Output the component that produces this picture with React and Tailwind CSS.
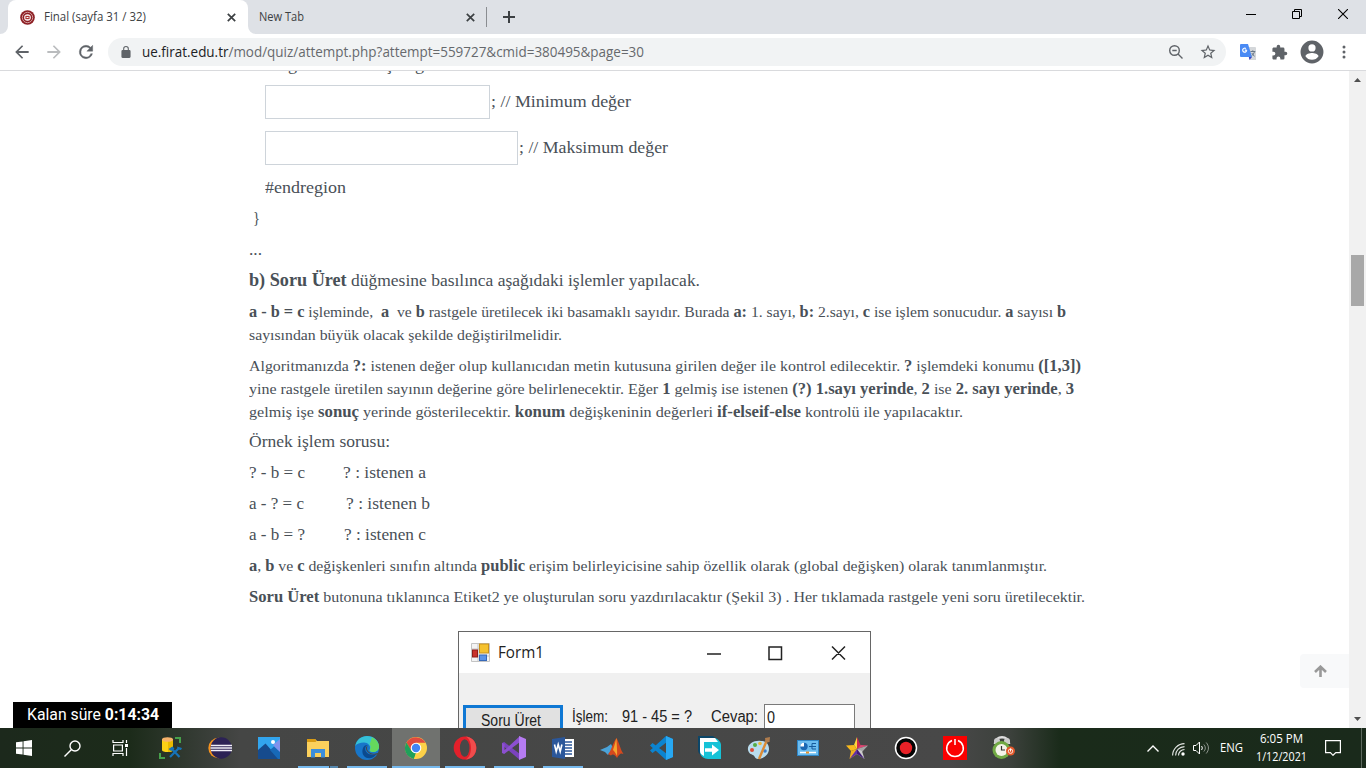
import { useLayoutEffect, useRef } from "react";

// Inline text that is stretched (or letter-spaced) so that it takes exactly w pixels.
function Fit({ w, spaced = false, className = "", children }) {
  const ref = useRef(null);
  useLayoutEffect(() => {
    const el = ref.current;
    el.style.letterSpacing = "0px";
    el.style.transform = "none";
    const width = el.getBoundingClientRect().width;
    if (spaced) el.style.letterSpacing = `${(w - width) / el.textContent.length}px`;
    else el.style.transform = `scaleX(${w / width})`;
  }, [w, spaced]);
  return (
    <span className="block whitespace-pre" style={{ width: w }}>
      <span ref={ref} className={`inline-block origin-left whitespace-pre ${className}`}>{children}</span>
    </span>
  );
}

const B = ({ children }) => <b className="text-[1.04em] leading-[0] font-bold">{children}</b>;

function Line({ w, small, children }) {
  return (
    <div className={small ? "text-[15.6px]" : "text-[17.3px]"}>
      <Fit w={w}>{children}</Fit>
    </div>
  );
}

const CloseX = () => (
  <svg className="h-[9px] w-[9px]" viewBox="0 0 9 9" stroke="#3c4043" strokeWidth="1.7"><path d="M.8.8l7.4 7.4M8.2.8L.8 8.2" /></svg>
);

function TabStrip() {
  return (
    <div className="flex h-[34px] shrink-0 bg-[#dee1e6] font-['Open_Sans',sans-serif] text-[12px] text-[#3c4043]">
      <svg className="mt-[26px] h-2 w-2" viewBox="0 0 8 8"><path d="M8 0v8H0A8 8 0 0 0 8 0z" fill="#fff" /></svg>
      <div className="flex w-[240px] items-center rounded-t-lg bg-white pl-3 pr-[12px]">
        <svg className="mr-[9px] h-[15px] w-[15px]" viewBox="0 0 15 15">
          <circle cx="7.5" cy="7.5" r="7.3" fill="#8d1f24" />
          <circle cx="7.5" cy="7.5" r="5.2" fill="none" stroke="#d9a9aa" strokeWidth=".9" />
          <circle cx="7.5" cy="7.5" r="3.3" fill="#fff" />
          <path d="M5.4 5.8h4.2v3.4H5.4z" fill="#a33" />
          <path d="M6.5 7.5h2" stroke="#fff" />
        </svg>
        <Fit w={102}>Final (sayfa 31 / 32)</Fit>
        <div className="ml-auto"><CloseX /></div>
      </div>
      <svg className="mt-[26px] h-2 w-2" viewBox="0 0 8 8"><path d="M0 0v8h8A8 8 0 0 1 0 0z" fill="#fff" /></svg>
      <div className="flex w-[230px] items-center pl-[3px] pr-[11px]">
        <Fit w={45}>New Tab</Fit>
        <div className="ml-auto"><CloseX /></div>
      </div>
      <div className="mt-[7px] h-[20px] w-px bg-[#8a8d91]" />
      <svg className="ml-[16px] mt-[11px] h-[12px] w-[12px]" viewBox="0 0 12 12" stroke="#3c4043" strokeWidth="2"><path d="M6 0v12M0 6h12" /></svg>
      <div className="ml-auto flex items-start pr-[18px] text-black">
        <svg className="mt-[9px] h-[11px] w-[10px]" viewBox="0 0 10 11"><path d="M0 5.5h10" stroke="#000" /></svg>
        <svg className="ml-[36px] mt-[9px] h-[10px] w-[10px]" viewBox="0 0 10 10" fill="none" stroke="#000"><path d="M.5 2.5h7v7h-7zM2.5 2.5v-2h7v7h-2" /></svg>
        <svg className="ml-[36px] mt-[9px] h-[10px] w-[10px]" viewBox="0 0 10 10" stroke="#000" strokeWidth="1.1"><path d="M0 0l10 10M10 0L0 10" /></svg>
      </div>
    </div>
  );
}

function Toolbar() {
  return (
    <div className="flex h-[37px] shrink-0 items-center border-b border-[#d9dadd] bg-white pl-[12px]">
      <svg className="h-5 w-5" viewBox="0 0 24 24" fill="#5f6368"><path d="M20 10.800H7.830l5.590-5.590L12 3.800l-8.200 8.200 8.200 8.200 1.410-1.410L7.830 13.200H20z" /></svg>
      <svg className="ml-[12px] h-5 w-5" viewBox="0 0 24 24" fill="#babcbe"><path d="M4 13.200h12.170l-5.590 5.590L12 20.200l8.200-8.200L12 3.800l-1.410 1.410 5.580 5.590H4z" /></svg>
      <svg className="ml-[12px] h-5 w-5" viewBox="0 0 24 24" fill="#5f6368" stroke="#5f6368" strokeWidth=".5"><path d="M17.65 6.35A7.96 7.96 0 0 0 12 4a8 8 0 1 0 7.73 10h-2.08A6 6 0 1 1 12 6c1.66 0 3.14.69 4.22 1.78L13 11h7V4l-2.35 2.35z" /></svg>
      <div className="ml-[12px] flex h-[28px] w-[1118px] items-center rounded-full bg-[#f1f3f4] pl-[13px] pr-[9px] font-['Open_Sans',sans-serif] text-[13.6px] text-[#66696d]">
        <svg className="mb-[1px] h-[12px] w-[10px]" viewBox="4 1 16 21" fill="#5f6368"><path d="M18 8h-1V6A5 5 0 0 0 7 6v2H6a2 2 0 0 0-2 2v10c0 1.100.9 2 2 2h12a2 2 0 0 0 2-2V10a2 2 0 0 0-2-2zM8.900 6a3.100 3.100 0 0 1 6.200 0v2H8.900z" /></svg>
        <div className="ml-[11px]">
          <Fit w={502}><span className="text-[#202124]">ue.firat.edu.tr</span>/mod/quiz/attempt.php?attempt=559727&amp;cmid=380495&amp;page=30</Fit>
        </div>
        <svg className="ml-auto h-4 w-4" viewBox="0 0 16 16" fill="none" stroke="#5f6368" strokeWidth="1.4"><circle cx="6.500" cy="6.500" r="4.800" /><path d="M10 10l4.500 4.500M4.300 6.500h4.400" /></svg>
        <svg className="ml-[15px] h-[18px] w-[18px]" viewBox="0 0 24 24" fill="#5f6368"><path d="M22 9.240l-7.190-.62L12 2 9.190 8.630 2 9.240l5.460 4.730L5.820 21 12 17.270 18.180 21l-1.630-7.030L22 9.240zM12 15.400l-3.760 2.270 1-4.280-3.320-2.880 4.380-.38L12 6.100l1.710 4.040 4.380.38-3.320 2.880 1 4.280L12 15.400z" /></svg>
      </div>
      <svg className="ml-[14px] h-4 w-4" viewBox="0 0 16 16">
        <path d="M6 3h9a1 1 0 0 1 1 1v12h-6z" fill="#d4d7da" />
        <path d="M0 1a1 1 0 0 1 1-1h7l4 13H1a1 1 0 0 1-1-1z" fill="#4a8af4" />
        <path d="M8.800 13H12l-2.500 3z" fill="#3b46c4" />
        <path d="M6.700 6.200H4.800M6.700 6.300A2 2 0 1 1 5.900 4.600" fill="none" stroke="#fff" strokeWidth="1.200" />
        <path d="M10.500 7.500h4.800M12.800 6.300v1.200M14.500 7.500c-.5 2-1.500 3.300-3 4.500M11.800 9c.7 1.400 1.600 2.400 2.800 3.200" fill="none" stroke="#687787" />
      </svg>
      <svg className="ml-[15px] h-[17px] w-[17px]" viewBox="0 0 24 24" fill="#5f6368"><path d="M20.500 11H19V7a2 2 0 0 0-2-2h-4V3.500a2.500 2.500 0 0 0-5 0V5H4c-1.100 0-1.990.9-1.990 2v3.800H3.500a2.700 2.700 0 0 1 0 5.400H2V20c0 1.100.9 2 2 2h3.800v-1.500a2.700 2.700 0 0 1 5.400 0V22H17a2 2 0 0 0 2-2v-4h1.500a2.500 2.500 0 0 0 0-5z" /></svg>
      <svg className="ml-[12px] h-[24px] w-[24px]" viewBox="1 1 22 22" fill="#5f6368"><path d="M12 1.500a10.500 10.500 0 1 0 0 21 10.500 10.500 0 0 0 0-21zM12 5a3.300 3.300 0 1 1 0 6.600A3.300 3.300 0 0 1 12 5zm0 14.200a7.200 7.200 0 0 1-6-3.220c.03-1.990 4-3.080 6-3.080s5.970 1.090 6 3.080a7.200 7.200 0 0 1-6 3.220z" /></svg>
      <svg className="ml-[18px] h-[16px] w-[4px]" viewBox="0 0 4 16" fill="#5f6368"><circle cx="2" cy="3" r="1.500" /><circle cx="2" cy="8" r="1.500" /><circle cx="2" cy="13" r="1.500" /></svg>
    </div>
  );
}

function FormShot() {
  return (
    <div className="ml-[209px] mt-[14px] h-[120px] w-[413px] shrink-0 border border-[#666] bg-[#f0f0f0] font-['Open_Sans',sans-serif] text-[#222]">
      <div className="flex h-[41px] items-center bg-white pl-[12px] text-[17px]">
        <svg className="h-[19px] w-[19px]" viewBox="0 0 19 19">
          <path d="M.5.500h18v18H.5zM.5 6h18M.5 13h18M7 .5v18" fill="#f4f4f4" stroke="#c4c4c4" />
          <rect x="8.500" y="1" width="9" height="9" fill="#f5c22f" stroke="#c9921c" />
          <rect x="1.500" y="7" width="5" height="7" fill="#c8322b" stroke="#8f1d19" />
          <rect x="8.500" y="12" width="7" height="5.500" fill="#5c94e8" stroke="#3769b8" />
        </svg>
        <div className="ml-[8px]"><Fit w={46}>Form1</Fit></div>
        <svg className="ml-auto mr-[24px] h-[16px] w-[140px]" viewBox="0 0 140 16" fill="none" stroke="#222" strokeWidth="1.500"><path d="M1 9h14M63 2h12.500v12.500H63zM126 1.500l13 13M139 1.500l-13 13" /></svg>
      </div>
      <div className="flex pt-[31px] font-['Liberation_Sans',sans-serif] text-[16px] leading-[28px]">
        <div className="ml-[4px] mt-[1px] flex h-[34px] w-[100px] border-[3px] border-[#0f78d4] bg-[#e1e1e1] pl-[15px] leading-[25px]"><Fit w={60}>Soru Üret</Fit></div>
        <div className="ml-[9px] leading-[26px]"><Fit w={36}>İşlem:</Fit></div>
        <div className="ml-[14px] leading-[26px]"><Fit w={70}>91 - 45 = ?</Fit></div>
        <div className="ml-[19px] leading-[26px]"><Fit w={47}>Cevap:</Fit></div>
        <div className="ml-[6px] h-[34px] w-[91px] border-[1.5px] border-[#7a7a7a] bg-white pl-[2px] leading-[25px]"><Fit w={8}>0</Fit></div>
      </div>
    </div>
  );
}

function Page() {
  return (
    <div className="relative flex min-h-0 flex-1 bg-white">
      <div className="flex min-w-0 flex-1 flex-col overflow-hidden pl-[249px] font-['Liberation_Serif',serif] leading-[22.93px] text-[#495057]">
        <div className="-mt-[17px] flex h-[23px] shrink-0 pl-[16px] text-[17.300px]">
          <Fit w={95}>#region Sınıf</Fit><div className="ml-[9px]"><Fit w={60}>başlangı</Fit></div>
        </div>
        <div className="mt-2 flex h-[34px] shrink-0 items-center pl-[16px]"><div className="mr-px h-full w-[225px] border border-[#ced4da]" /><Line w={140}>; // Minimum değer</Line></div>
        <div className="mt-3 flex h-[34px] shrink-0 items-center pl-[16px]"><div className="mr-px h-full w-[253px] border border-[#ced4da]" /><Line w={149}>; // Maksimum değer</Line></div>
        <div className="mt-[12px] flex flex-col gap-2">
          <div className="pl-[16px]"><Line w={81}>#endregion</Line></div>
          <div className="pl-[4px]"><Line w={7}>{"}"}</Line></div>
          <Line w={13}>...</Line>
          <Line w={451}><B>b) Soru Üret</B> düğmesine basılınca aşağıdaki işlemler yapılacak.</Line>
          <div>
            <Line small w={817}><B>a - b = c</B> işleminde,  <B>a</B>  ve <B>b</B> rastgele üretilecek iki basamaklı sayıdır. Burada <B>a:</B> 1. sayı, <B>b:</B> 2.sayı, <B>c</B> ise işlem sonucudur. <B>a</B> sayısı <B>b</B></Line>
            <Line small w={313}>sayısından büyük olacak şekilde değiştirilmelidir.</Line>
          </div>
          <div>
            <Line small w={832}>Algoritmanızda <B>?:</B> istenen değer olup kullanıcıdan metin kutusuna girilen değer ile kontrol edilecektir. <B>?</B> işlemdeki konumu <B>([1,3])</B></Line>
            <Line small w={825}>yine rastgele üretilen sayının değerine göre belirlenecektir. Eğer <B>1</B> gelmiş ise istenen <B>(?) 1.sayı yerinde</B>, <B>2</B> ise <B>2. sayı yerinde</B>, <B>3</B></Line>
            <Line small w={714}>gelmiş işe <B>sonuç</B> yerinde gösterilecektir. <B>konum</B> değişkeninin değerleri <B>if-elseif-else</B> kontrolü ile yapılacaktır.</Line>
          </div>
          <Line w={141}>Örnek işlem sorusu:</Line>
          <div className="flex"><div className="w-[94px]"><Line w={56}>? - b = c</Line></div><Line w={83}>? : istenen a</Line></div>
          <div className="flex"><div className="w-[97px]"><Line w={55}>a - ? = c</Line></div><Line w={84}>? : istenen b</Line></div>
          <div className="flex"><div className="w-[95px]"><Line w={56}>a - b = ?</Line></div><Line w={82}>? : istenen c</Line></div>
          <Line small w={798}><B>a</B>, <B>b</B> ve <B>c</B> değişkenleri sınıfın altında <B>public</B> erişim belirleyicisine sahip özellik olarak (global değişken) olarak tanımlanmıştır.</Line>
          <Line small w={836}><B>Soru Üret</B> butonuna tıklanınca Etiket2 ye oluşturulan soru yazdırılacaktır (Şekil 3) . Her tıklamada rastgele yeni soru üretilecektir.</Line>
          <FormShot />
        </div>
      </div>
      <div className="flex w-[17px] flex-col items-center bg-[#f1f1f1]">
        <svg className="mt-[7px] h-[4px] w-[7px]" viewBox="0 0 7 4"><path d="M0 4l3.500-4L7 4z" fill="#505050" /></svg>
        <div className="mt-[173px] h-[51px] w-[13px] bg-[#a8a8a8]" />
        <svg className="mb-[7px] mt-auto h-[4px] w-[7px]" viewBox="0 0 7 4"><path d="M0 0l3.500 4L7 0z" fill="#505050" /></svg>
      </div>
      <div className="absolute right-[17px] bottom-[40px] flex h-[34px] w-[49px] items-center rounded-l bg-[#f8f9fa] pl-[14px]">
        <svg className="h-[12px] w-[13px]" viewBox="0 0 13 12" fill="none" stroke="#999" strokeWidth="2.600"><path d="M6.500 12V2M1 7l5.500-5.300L12 7" /></svg>
      </div>
      <div className="absolute bottom-0 left-[13px] flex h-[26px] w-[159px] items-center bg-black pl-[14px] font-['Roboto',sans-serif] text-[16px] text-white">
        <Fit w={132}>Kalan süre <b className="font-bold">0:14:34</b></Fit>
      </div>
    </div>
  );
}

const I = ({ children }) => <svg className="h-[24px] w-[24px]" viewBox="0 0 24 24">{children}</svg>;

const apps = [
  { icon: <I><path d="M3 3v11c0 1.500 2.500 2 5.500 2s5.500-.5 5.500-2V3z" fill="#fcd116" /><path d="M9 3h5v11c0 1-2 1.800-5 2z" fill="#e9b900" /><ellipse cx="8.500" cy="3.500" rx="5.500" ry="2.300" fill="#f6b26b" /><path d="M16 2h5v5M1 17v5h5" fill="none" stroke="#47a04b" strokeWidth="2" /><path d="M11 21l9-9M12 12l8.500 9" stroke="#1673b8" strokeWidth="2.200" /><path d="M9.500 13l4-2.500 2 2-3.500 2.500zM18 10.500l1 3 3 .5 1-2" fill="#1673b8" /></I> },
  { icon: <I><circle cx="10.500" cy="12" r="10.200" fill="#f7941e" /><circle cx="13.200" cy="12" r="10.700" fill="#2c2255" /><path d="M3 9.500h21M2.500 12h21.500M3 14.500h21" stroke="#f1eff8" strokeWidth="1.500" /></I> },
  { icon: <I><path d="M1 1h22v22H1z" fill="#32a5ee" /><path d="M16 9l7-6v14z" fill="#7f92ec" /><path d="M1 14l7.500-6.500L22 23H1z" fill="#164b8d" /><path d="M13 14l4-3.500 6 5.500v7h-2z" fill="#1769b8" /><circle cx="16" cy="6" r="2" fill="#fff" /></I> },
  { icon: <I><path d="M1 3h8l2 2h12v16H1z" fill="#fbd05c" /><path d="M1 3h8l1.500 2-1 1H1z" fill="#d99b13" /><path d="M5 13h14v8.500h-4V17H9v4.500H5z" fill="#3c8edb" /></I>, line: "split" },
  { icon: <I><circle cx="12" cy="12" r="12" fill="#1876c9" /><path d="M.2 10C1.500 3.500 6.500 0 12 0c7 0 12 5 12 10.500 0 4-3 5.500-6 5.500-2.500 0-4-1-3-2.700C16 10 13 6.500 9 6.500 5 6.500 1.500 8 .2 10z" fill="#35c1d8" /><path d="M17 1.200c4.500 2.200 7 6 7 9.300 0 4-3 5.500-6 5.500-2.500 0-4-1-3-2.700 1-1.800.7-3.500-.3-5z" fill="#65d95d" /><path d="M8 12c1-2.500 3-3.500 5-3-3 1-3.500 4-2 6.500 2 3.500 7 4 10.500 2.500C18.500 23 12 23.500 9 20c-2-2.300-2-5.500-1-8z" fill="#0b4a8e" /><path d="M12.500 10c-1.500 3 .5 6.500 4.500 7.500 2.500.5 5 .2 7-1.200v1.500c-1.500.8-3 1-4.500 1-5 0-9-3.500-8.500-7 .2-1 .8-1.600 1.500-1.800z" fill="#484848" /></I>, line: "wide" },
  { icon: <I><circle cx="12" cy="12" r="11" fill="#fdd148" /><path d="M2.500 6.500A11 11 0 0 1 21.500 6.700H12l-5 8z" fill="#e04a3f" /><path d="M2.500 6.500l5 8.500L12 17l-2 6A11 11 0 0 1 2.500 6.500z" fill="#1fa05b" /><path d="M12 17l5-2-5 8h-2z" fill="#fdd148" /><circle cx="12" cy="12" r="5.300" fill="#fff" /><circle cx="12" cy="12" r="4.200" fill="#4285f4" /></I>, line: "full", active: true },
  { icon: <I><ellipse cx="12" cy="12" rx="11.300" ry="11.500" fill="#e3202b" /><path d="M12 .5c6.500 0 11.300 5 11.300 11.500S18.500 23.500 12 23.500c3 0 6-5 6-11.500S15 .5 12 .5z" fill="#f04c4c" /><ellipse cx="11.700" cy="12" rx="4.800" ry="8.700" fill="#484848" /></I>, line: "wide" },
  { icon: <I><path d="M0 7l2.200-1L18 18v6L0 9z" fill="#7a42be" /><path d="M0 7v10l2.200 1L18 6V0L5 12 2.500 14V8z" fill="#8c50d0" /><path d="M17 0l7 3v18l-7 3z" fill="#b67cf2" /></I>, line: "wide" },
  { icon: <I><path d="M12 3h11v18H12z" fill="#fff" /><path d="M14 6h7M14 9h7M14 12h7M14 15h7M14 18h7" stroke="#2b579a" strokeWidth="1.300" /><path d="M1 3l13-2v22L1 21z" fill="#2b579a" /><path d="M3.500 8.500l1.700 7 2-7 2 7 1.700-7" fill="none" stroke="#fff" strokeWidth="1.600" /></I>, line: "wide" },
  { icon: <I><path d="M0 14l7-3 4-3 2 4-5 7-3-3z" fill="#4aa3d9" /><path d="M8 18c3-2 5-12 8.500-16 2.500 4 4 12 7 16-3-1.500-4 0-6.500 4-2-3-4-4.500-6-2.500z" fill="#d5491e" /><path d="M13 14c1.500-4 2.500-9 3.500-12 0 6 1 13 .5 18-1-2-2-4-4-6z" fill="#f6a52d" /></I> },
  { icon: <I><path d="M17 0l7 3v18l-7 3L1 9.500 3.500 7 18 18V6L3.500 17 1 14.500z" fill="#0b84d0" /><path d="M17 0l7 3v18l-7 3z" fill="#27a8f3" /></I> },
  { icon: <I><path d="M0 0h15l4 3H3v16c-2-1-3-3-3-5z" fill="#0c4668" /><path d="M2 2h15c3 1 6 4 6 7v14H10c-4 0-8-3-8-7z" fill="#16c2d7" /><path d="M2 2h15l3 4H6v14c-2.500-1-4-3-4-5z" fill="#fff" /><path d="M7 12.200h7V8.500l7 5.500-7 5.500v-3.800H7z" fill="#fff" /></I> },
  { icon: <I><path d="M1 14C0 8 7 4 14 5c6 0 8 4 8 8 0 6-6 10-11 10-3 0-3-3-5-4s-4-1-5-5z" fill="#b9dced" /><circle cx="5" cy="14" r="2" fill="#dc4b36" /><circle cx="8" cy="9" r="2" fill="#55ad43" /><circle cx="13" cy="7.500" r="1.800" fill="#f0b534" /><circle cx="18" cy="15" r="1.800" fill="#3c7dca" /><path d="M12 23l8-19" stroke="#dd8b34" strokeWidth="2.400" /><path d="M18 2l5-1-.5 5-4 .5z" fill="#af7c4d" /></I> },
  { icon: <I><rect x="1.500" y="4.500" width="21" height="15" fill="#6bbcf0" stroke="#2e85c6" /><circle cx="8" cy="10.500" r="3.700" fill="#1b68b4" /><path d="M8 10.500V6.800a3.700 3.700 0 0 0-3.700 3.700z" fill="#fff" /><path d="M13 10.500h3M16 7.500v5.500M16 7.500h4M16 10.500h4M16 13h4" fill="none" stroke="#175b9d" /><path d="M4 16.500h16" stroke="#fff" strokeWidth="1.500" /><path d="M10 16.500h3" stroke="#e3912c" strokeWidth="2" /></I> },
  { icon: <I><path d="M12 1l3.500 8L12 13z" fill="#cf2c52" /><path d="M12 1l-3 8 3 4z" fill="#ffd83b" /><path d="M1 9.500L9 9l3 4-6 2z" fill="#f9b91c" /><path d="M23 9.500L15.500 9 12 13z" fill="#e04472" /><path d="M23 9.500L12 13l5 3z" fill="#a5a5a5" /><path d="M19.500 23L17 15l-5-2v5z" fill="#cbcbcb" /><path d="M4.500 23L6 15l6-2v5z" fill="#f0b020" /><path d="M4.500 23L12 13v5z" fill="#6031a7" /><path d="M12 18v-5l7.500 10z" fill="#411a77" /></I> },
  { icon: <I><circle cx="12" cy="12" r="10.500" fill="#050505" stroke="#fff" strokeWidth="1.500" /><circle cx="12" cy="12" r="6.200" fill="#e82127" /></I> },
  { icon: <I><path d="M0 0h24v24H0z" fill="#fb0000" /><path d="M9 4.500a8.300 8.300 0 1 0 6 0M12 3v6" fill="none" stroke="#fff" strokeWidth="1.500" /></I> },
  { icon: <I><path d="M3 8c0-9 14-9 14 0" fill="none" stroke="#dedede" strokeWidth="2.500" /><circle cx="5" cy="5" r="3" fill="#ccc" /><circle cx="15" cy="5" r="3" fill="#ccc" /><circle cx="9.500" cy="14" r="9" fill="#71a944" /><circle cx="9.500" cy="14" r="6" fill="#f4f3e9" /><path d="M9.500 10v4h3.500" fill="none" stroke="#333" strokeWidth="1.200" /><circle cx="18.500" cy="15" r="4.500" fill="#e2582b" /><path d="M18.500 12.500v3" stroke="#fff" /><circle cx="18.500" cy="15.200" r="2.200" fill="none" stroke="#fff" strokeWidth=".8" /></I> },
];

function Underline({ kind }) {
  if (kind === "full") return <div className="h-[2px] w-[48px] bg-[#76b9ed]" />;
  if (kind === "wide") return <div className="h-[2px] w-[40px] bg-[#76b9ed]" />;
  if (kind === "split") return <div className="flex h-[2px] w-[40px] gap-px"><div className="w-[31px] bg-[#76b9ed]" /><div className="w-[8px] bg-[#5688ae]" /></div>;
  return <div className="h-[2px]" />;
}

function Taskbar() {
  return (
    <div className="flex h-[40px] shrink-0 bg-[linear-gradient(90deg,#1c291c_0px,#1c2b1a_130px,#454645_240px,#484848_950px,#3c413c_1010px,#1a2b1a_1060px,#1a2a1b_1366px)] font-['Open_Sans',sans-serif] text-[12px] text-white">
      <div className="flex w-[48px] items-center justify-center"><svg className="h-4 w-4" viewBox="0 0 16 16" fill="#fff"><path d="M0 2.300L6.600 1.400v6.100H0zM7.500 1.200L16 0v7.500H7.500zM0 8.400h6.600v6.200L0 13.700zM7.500 8.400H16V16l-8.500-1.200z" /></svg></div>
      <div className="flex w-[48px] items-center justify-center"><svg className="h-[17px] w-[17px]" viewBox="0 0 17 17" fill="none" stroke="#fff" strokeWidth="1.400"><circle cx="11" cy="6" r="5" /><path d="M7.500 9.500L.5 16.500" /></svg></div>
      <div className="mr-[3px] flex w-[48px] items-center justify-center"><svg className="h-[16px] w-[17px]" viewBox="0 0 17 16" fill="none" stroke="#fff" strokeWidth="1.200"><path d="M1 0v2.500h10V0M1 16v-2.500h10V16M1.600 5h8.800v6H1.600zM14.500 0v3M14.500 8v8" /><path d="M13 4h3v3h-3z" fill="#fff" stroke="none" /></svg></div>
      <div className="flex gap-px">
        {apps.map((a, i) => (
          <div key={i} className={`flex w-[48px] flex-col items-center ${a.active ? "bg-[#70726f]" : ""}`}>
            <div className="flex flex-1 items-center pt-[2px]">{a.icon}</div>
            <Underline kind={a.line} />
          </div>
        ))}
      </div>
      <div className="ml-auto flex items-center">
        <svg className="h-[7px] w-[12px]" viewBox="0 0 12 7" fill="none" stroke="#fff" strokeWidth="1.400"><path d="M.5 6.500L6 1l5.500 5.500" /></svg>
        <svg className="ml-[13px] mt-[3px] h-[13px] w-[13px]" viewBox="0 0 13 13" fill="none" stroke="#e5e8e5" strokeWidth="1.100"><path d="M.6 12.500A12 12 0 0 1 12.500.6M3.600 12.500a9 9 0 0 1 8.900-8.900M6.500 12.500a6 6 0 0 1 6-6" /><circle cx="11" cy="11" r="1.700" fill="#fff" stroke="none" /></svg>
        <svg className="ml-[8px] h-[14px] w-[17px]" viewBox="0 0 17 14" fill="none" stroke="#fff" strokeWidth="1"><path d="M.5 4.500h2.500L6.500 1v12L3 9.500H.5zM8.500 5c1 1.300 1 2.700 0 4" /><path d="M10.800 3.500c2 2.300 2 4.700 0 7M13.200 1.500c3 3.500 3 7.500 0 11" opacity=".5" /></svg>
        <div className="ml-[10px]"><Fit w={23}>ENG</Fit></div>
        <div className="ml-[12px] flex w-[53px] flex-col items-center leading-[18px]"><Fit w={43}>6:05 PM</Fit><Fit w={51}>1/12/2021</Fit></div>
        <svg className="ml-[17px] h-[16px] w-[16px]" viewBox="0 0 16 16" fill="none" stroke="#fff" strokeWidth="1.200"><path d="M.6.600h14.800v12h-4.600L8 15.300l-2.600-2.700H.6z" /></svg>
        <div className="ml-[20px] mr-[4px] h-[40px] w-px bg-[#5d695e]" />
      </div>
    </div>
  );
}

export default function App() {
  return (
    <div className="flex h-screen w-screen flex-col overflow-hidden bg-white">
      <TabStrip />
      <Toolbar />
      <Page />
      <Taskbar />
    </div>
  );
}
